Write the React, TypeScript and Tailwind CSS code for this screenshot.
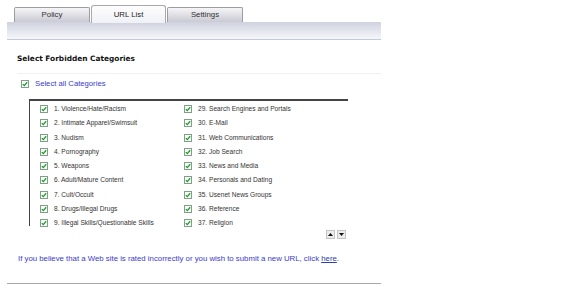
import React from "react"

const left = [
  "1. Violence/Hate/Racism",
  "2. Intimate Apparel/Swimsuit",
  "3. Nudism",
  "4. Pornography",
  "5. Weapons",
  "6. Adult/Mature Content",
  "7. Cult/Occult",
  "8. Drugs/Illegal Drugs",
  "9. Illegal Skills/Questionable Skills",
]

const right = [
  "29. Search Engines and Portals",
  "30. E-Mail",
  "31. Web Communications",
  "32. Job Search",
  "33. News and Media",
  "34. Personals and Dating",
  "35. Usenet News Groups",
  "36. Reference",
  "37. Religion",
]

function Check() {
  return (
    <svg width="8" height="8" viewBox="0 0 8 8" className="shrink-0">
      <rect x="0.5" y="0.5" width="7" height="7" fill="#fbfdfb" stroke="#7f9f86" />
      <path d="M1.8 4.1 L3.3 5.6 L6.2 2.3" fill="none" stroke="#1d9a2a" strokeWidth="1.3" />
    </svg>
  )
}

function Tab({ label, active }: { label: string; active?: boolean }) {
  if (active) {
    return (
      <div className="w-[75px] h-[18px] mb-[-1px] flex items-center justify-center rounded-t-[3px] border border-b-0 border-[#a9a9ad] bg-gradient-to-b from-[#fdfdfd] to-[#f0f1f5] text-[7.8px] text-[#222]">
        {label}
      </div>
    )
  }
  return (
    <div className="w-[76px] h-[15px] flex items-center justify-center rounded-t-[2px] border border-b-0 border-[#9c9ca4] bg-gradient-to-b from-[#f6f6f7] to-[#c9cad3] text-[7.8px] text-[#333]">
      {label}
    </div>
  )
}

export default function App() {
  return (
    <div
      className="w-[576px] h-[287px] bg-white overflow-hidden"
      style={{ fontFamily: '"Liberation Sans", Arial, sans-serif' }}
    >
      <div className="flex items-end gap-[1px] pl-[14px] pt-[4px] h-[22px]">
        <Tab label="Policy" />
        <Tab label="URL List" active />
        <Tab label="Settings" />
      </div>
      <div className="ml-[7px] w-[374px] h-[18px] bg-gradient-to-b from-[#cfd2df] to-[#f6f7fa] border-b border-[#c5c9dc]" />

      <div
        className="pl-[17px] mt-[14px] text-[7.4px] font-bold text-[#111] leading-[10px]"
        style={{ fontFamily: '"DejaVu Sans", Verdana, sans-serif' }}
      >
        Select Forbidden Categories
      </div>
      <div className="ml-[17px] w-[364px] mt-[9px] border-t border-[#f0f0f0]" />

      <div className="flex items-center gap-[6px] pl-[21px] mt-[5px] h-[10px]">
        <Check />
        <span className="text-[7.7px] text-[#3a3acc]">Select all Categories</span>
      </div>

      <div className="ml-[29px] w-[319px] mt-[10px] h-[127px] border-t-2 border-l border-[#444] pt-[1px]">
        <div className="flex">
          <div className="w-[154px] pl-[10px] flex flex-col">
            {left.map((t) => (
              <div key={t} className="h-[14.25px] flex items-center gap-[6px]">
                <Check />
                <span className="text-[6.6px] text-[#333]">{t}</span>
              </div>
            ))}
          </div>
          <div className="flex flex-col">
            {right.map((t) => (
              <div key={t} className="h-[14.25px] flex items-center gap-[6px]">
                <Check />
                <span className="text-[6.6px] text-[#333]">{t}</span>
              </div>
            ))}
          </div>
        </div>
      </div>

      <div className="ml-[326px] w-[22px] flex gap-[2px] mt-[4px]">
        <div className="w-[9px] h-[9px] bg-[#ececec] border border-[#c4c4c4] flex items-center justify-center">
          <svg width="5" height="3" viewBox="0 0 5 3">
            <path d="M0 3 L2.5 0 L5 3 Z" fill="#111" />
          </svg>
        </div>
        <div className="w-[9px] h-[9px] bg-[#ececec] border border-[#c4c4c4] flex items-center justify-center">
          <svg width="5" height="3" viewBox="0 0 5 3">
            <path d="M0 0 L2.5 3 L5 0 Z" fill="#111" />
          </svg>
        </div>
      </div>

      <div className="pl-[18px] mt-[15px] text-[7.8px] text-[#3a3acc] leading-[10px]">
        If you believe that a Web site is rated incorrectly or you wish to submit a new URL, click{" "}
        <span className="underline text-[#2c3ca8]">here</span>.
      </div>

      <div className="ml-[7px] w-[374px] mt-[19px] border-t border-[#a8a8a8]" />
    </div>
  )
}
